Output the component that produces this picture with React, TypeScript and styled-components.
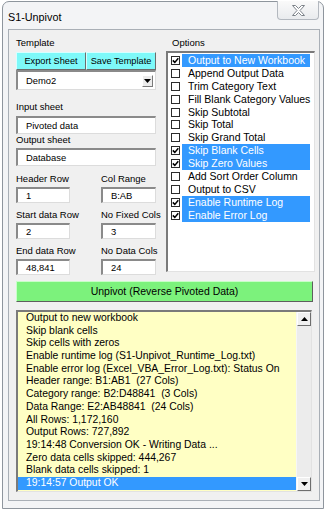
import styled, { createGlobalStyle } from 'styled-components'

const GlobalStyle = createGlobalStyle`
  html, body {
    margin: 0;
    padding: 0;
    background: #ffffff;
  }
  body {
    font-family: "Liberation Sans", Arial, sans-serif;
    color: #000;
  }
  * {
    box-sizing: border-box;
  }
`

const Window = styled.div`
  width: 322px;
  height: 508px;
  margin: 1px 0 0 2px;
  border: 1px solid #8e959d;
  border-radius: 7px 7px 0 0;
  background: #f3f4f6;
  display: flex;
  flex-direction: column;
`

const TitleBar = styled.div`
  height: 27px;
  flex: none;
  display: flex;
  align-items: flex-start;
  justify-content: space-between;
  padding-left: 5px;
`

const Title = styled.div`
  padding-top: 8px;
  font-size: 10.8px;
  line-height: 14px;
`

const CloseButton = styled.div`
  width: 42px;
  height: 19px;
  margin: -1px 4px 0 0;
  border: 1px solid #b3b8bf;
  border-top: none;
  border-radius: 0 0 4px 4px;
  background: linear-gradient(#fafafa, #e9ebee);
  display: flex;
  align-items: center;
  justify-content: center;
`

const Client = styled.div`
  flex: 1;
  margin: 0 3px 7px 5px;
  border: 1px solid #a9afb6;
  background: #f0f0f0;
  padding: 6px 4px 0 7px;
  display: flex;
  flex-direction: column;
`

const TopArea = styled.div`
  display: grid;
  grid-template-columns: 140px 149px;
  column-gap: 10px;
`

const Column = styled.div`
  display: flex;
  flex-direction: column;
`

const Label = styled.div<{ $top?: number; $lh?: number; $indent?: number }>`
  margin-top: ${({ $top }) => $top ?? 0}px;
  padding-left: ${({ $indent }) => $indent ?? 0}px;
  font-size: 9.5px;
  line-height: ${({ $lh }) => $lh ?? 14}px;
  height: ${({ $lh }) => $lh ?? 14}px;
  white-space: nowrap;
`

const ButtonRow = styled.div`
  margin-top: 2px;
  display: flex;
  height: 18px;
`

const CyanButton = styled.div`
  flex: 1;
  background: #7ef9f9;
  border: 1px solid;
  border-color: #d8ffff #6c6c6c #6c6c6c #d8ffff;
  font-size: 9.2px;
  line-height: 16px;
  text-align: center;
  white-space: nowrap;
`

const Sunken = styled.div<{ $h: number; $top?: number }>`
  margin-top: ${({ $top }) => $top ?? 0}px;
  height: ${({ $h }) => $h}px;
  background: #ffffff;
  border-style: solid;
  border-width: 2px 1px 1px 2px;
  border-color: #8a8a8a #dcdcdc #dcdcdc #8a8a8a;
  padding-left: 8px;
  font-size: 9.4px;
  line-height: ${({ $h }) => $h - 3}px;
  white-space: nowrap;
  display: flex;
  align-items: center;
  justify-content: space-between;
`

const DropButton = styled.div`
  width: 11px;
  height: 12px;
  margin-right: 2px;
  background: #ececec;
  border: 1px solid;
  border-color: #ffffff #7a7a7a #7a7a7a #ffffff;
  display: flex;
  align-items: center;
  justify-content: center;
`

const SmallGrid = styled.div`
  display: grid;
  grid-template-columns: 85px 55px;
`

const SmallCell = styled.div<{ $w: number }>`
  display: flex;
  flex-direction: column;
  width: ${({ $w }) => $w}px;
`

const ListBox = styled.div`
  margin-top: 1px;
  height: 221px;
  background: #ffffff;
  border-style: solid;
  border-width: 2px 1px 1px 2px;
  border-color: #7a7a7a #e2e2e2 #e2e2e2 #7a7a7a;
  padding-top: 1px;
`

const OptionRow = styled.div`
  height: 12.9px;
  display: flex;
  align-items: center;
`

const Check = styled.div`
  width: 9px;
  height: 9px;
  margin-left: 3px;
  border: 1px solid #2b2b2b;
  background: #ffffff;
  flex: none;
  display: flex;
  align-items: center;
  justify-content: center;
`

const OptionText = styled.div<{ $on: boolean }>`
  flex: 1;
  margin: 0 4px 0 2px;
  padding-left: 6px;
  height: 12.9px;
  font-size: 10.5px;
  line-height: 12.9px;
  white-space: nowrap;
  background: ${({ $on }) => ($on ? '#3399ff' : 'transparent')};
  color: ${({ $on }) => ($on ? '#ffffff' : '#000000')};
`

const RunButton = styled.div`
  margin: 6px 2px 0 0;
  height: 21px;
  background: #7cf27c;
  border: 1px solid;
  border-color: #c8ffc8 #5e5e5e #5e5e5e #c8ffc8;
  font-size: 10.5px;
  line-height: 19px;
  text-align: center;
`

const LogBox = styled.div`
  margin: 8px 3px 0 0;
  height: 182px;
  background: #ffffc4;
  border-style: solid;
  border-width: 2px 1px 1px 2px;
  border-color: #7a7a7a #e2e2e2 #e2e2e2 #7a7a7a;
  display: flex;
`

const LogLines = styled.div`
  flex: 1;
  display: flex;
  flex-direction: column;
`

const LogLine = styled.div<{ $on?: boolean }>`
  height: 12.7px;
  padding-left: 8px;
  font-size: 10.4px;
  line-height: 12.7px;
  white-space: pre;
  background: ${({ $on }) => ($on ? '#3399ff' : 'transparent')};
  color: ${({ $on }) => ($on ? '#ffffff' : '#000000')};
`

const ScrollBar = styled.div`
  width: 15px;
  flex: none;
  background: #ececec;
  border-left: 1px solid #f6f6f6;
  display: flex;
  flex-direction: column;
  justify-content: space-between;
`

const ScrollArrow = styled.div`
  height: 14px;
  background: #f0f0f0;
  border: 1px solid;
  border-color: #ffffff #6e6e6e #6e6e6e #ffffff;
  display: flex;
  align-items: center;
  justify-content: center;
`

const options = [
  { text: 'Output to New Workbook', on: true },
  { text: 'Append Output Data', on: false },
  { text: 'Trim Category Text', on: false },
  { text: 'Fill Blank Category Values', on: false },
  { text: 'Skip Subtotal', on: false },
  { text: 'Skip Total', on: false },
  { text: 'Skip Grand Total', on: false },
  { text: 'Skip Blank Cells', on: true },
  { text: 'Skip Zero Values', on: true },
  { text: 'Add Sort Order Column', on: false },
  { text: 'Output to CSV', on: false },
  { text: 'Enable Runtime Log', on: true },
  { text: 'Enable Error Log', on: true },
]

const logLines = [
  'Output to new workbook',
  'Skip blank cells',
  'Skip cells with zeros',
  'Enable runtime log (S1-Unpivot_Runtime_Log.txt)',
  'Enable error log (Excel_VBA_Error_Log.txt): Status On',
  'Header range: B1:AB1  (27 Cols)',
  'Category range: B2:D48841  (3 Cols)',
  'Data Range: E2:AB48841  (24 Cols)',
  'All Rows: 1,172,160',
  'Output Rows: 727,892',
  '19:14:48 Conversion OK - Writing Data ...',
  'Zero data cells skipped: 444,267',
  'Blank data cells skipped: 1',
  '19:14:57 Output OK',
]

const smallFields = [
  { label: 'Header Row', value: '1', top: 6 },
  { label: 'Col Range', value: 'B:AB', top: 6 },
  { label: 'Start data Row', value: '2', top: 5 },
  { label: 'No Fixed Cols', value: '3', top: 5 },
  { label: 'End data Row', value: '48,841', top: 5 },
  { label: 'No Data Cols', value: '24', top: 5 },
]

function Arrow({ up }: { up?: boolean }) {
  return (
    <svg width="7" height="4" viewBox="0 0 7 4">
      <path d={up ? 'M0 4 L3.5 0 L7 4 Z' : 'M0 0 L7 0 L3.5 4 Z'} fill="#000" />
    </svg>
  )
}

function CheckBox({ on }: { on: boolean }) {
  return (
    <Check>
      {on && (
        <svg width="7" height="7" viewBox="0 0 7 7">
          <path d="M0.8 3.4 L2.8 5.4 L6.3 1.2" stroke="#000" strokeWidth="1.5" fill="none" />
        </svg>
      )}
    </Check>
  )
}

export default function App() {
  return (
    <>
      <GlobalStyle />
      <Window>
        <TitleBar>
          <Title>S1-Unpivot</Title>
          <CloseButton>
            <svg width="13" height="11" viewBox="0 0 13 11">
              <polygon
                points="0.5,0.5 3.5,0.5 6.5,3.5 9.5,0.5 12.5,0.5 8,5.5 12.5,10.5 9.5,10.5 6.5,7.5 3.5,10.5 0.5,10.5 5,5.5"
                fill="#ffffff"
                stroke="#7d838a"
                strokeWidth="1"
              />
            </svg>
          </CloseButton>
        </TitleBar>
        <Client>
          <TopArea>
            <Column>
              <Label>Template</Label>
              <ButtonRow>
                <CyanButton>Export Sheet</CyanButton>
                <CyanButton>Save Template</CyanButton>
              </ButtonRow>
              <Sunken $h={20}>
                Demo2
                <DropButton>
                  <Arrow />
                </DropButton>
              </Sunken>
              <Label $top={10}>Input sheet</Label>
              <Sunken $h={18} $top={2}>Pivoted data</Sunken>
              <Label $lh={12}>Output sheet</Label>
              <Sunken $h={18} $top={2}>Database</Sunken>
              <SmallGrid>
                {smallFields.map((f, i) => (
                  <SmallCell key={f.label} $w={i % 2 === 0 ? 54 : 55}>
                    <Label $top={f.top}>{f.label}</Label>
                    <Sunken $h={16} $top={1}>{f.value}</Sunken>
                  </SmallCell>
                ))}
              </SmallGrid>
            </Column>
            <Column>
              <Label $indent={6}>Options</Label>
              <ListBox>
                {options.map((o) => (
                  <OptionRow key={o.text}>
                    <CheckBox on={o.on} />
                    <OptionText $on={o.on}>{o.text}</OptionText>
                  </OptionRow>
                ))}
              </ListBox>
            </Column>
          </TopArea>
          <RunButton>Unpivot (Reverse Pivoted Data)</RunButton>
          <LogBox>
            <LogLines>
              {logLines.map((line, i) => (
                <LogLine key={line} $on={i === logLines.length - 1}>
                  {line}
                </LogLine>
              ))}
            </LogLines>
            <ScrollBar>
              <ScrollArrow>
                <Arrow up />
              </ScrollArrow>
              <ScrollArrow>
                <Arrow />
              </ScrollArrow>
            </ScrollBar>
          </LogBox>
        </Client>
      </Window>
    </>
  )
}
